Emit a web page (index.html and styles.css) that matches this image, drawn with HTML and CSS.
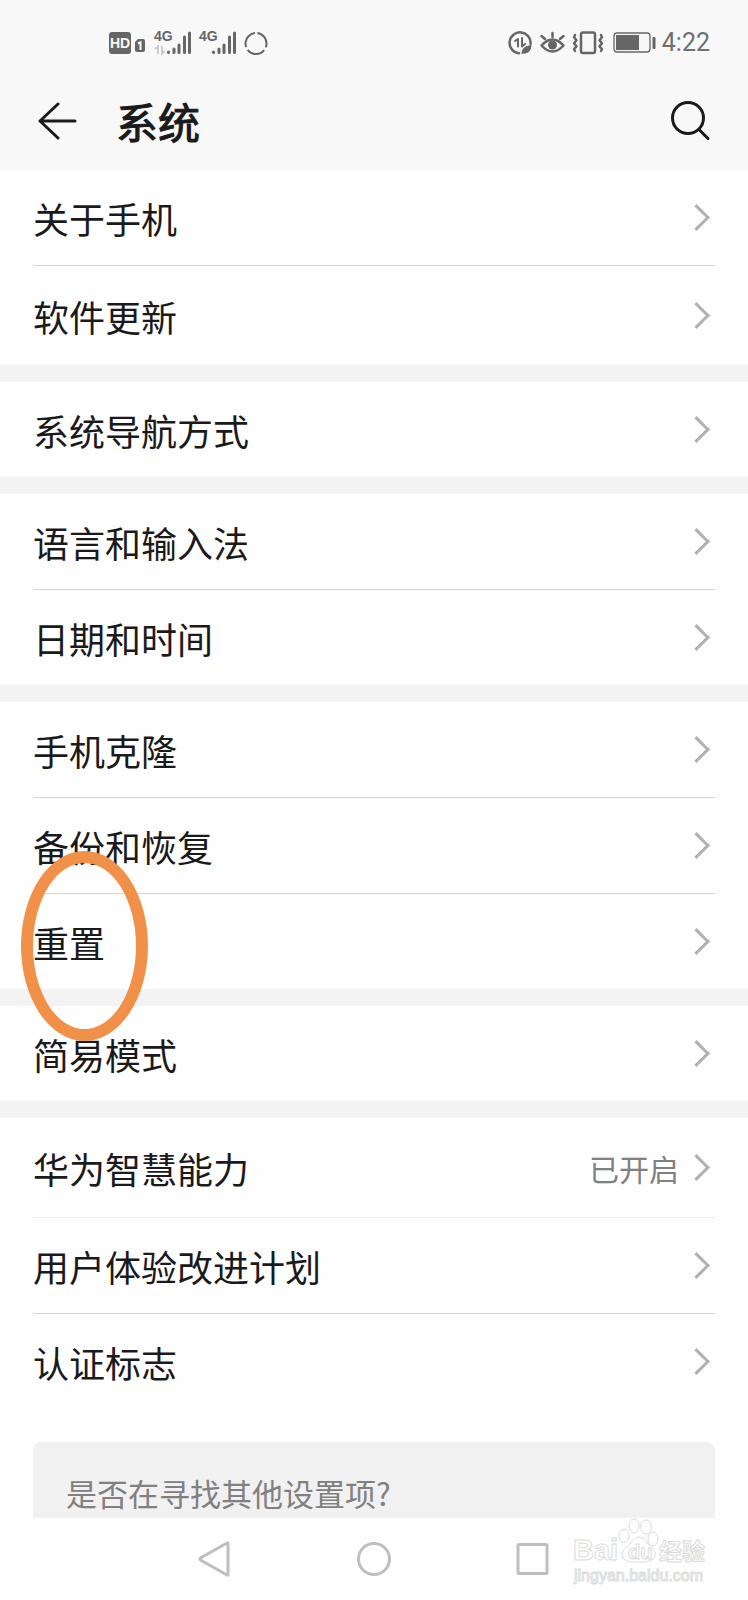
FILE: index.html
```html
<!DOCTYPE html>
<html lang="zh-CN">
<head>
    <meta charset="UTF-8">
    <meta name="viewport" content="width=device-width, initial-scale=1.0">
    <title>系统</title>
    <link rel="stylesheet" href="styles.css">
</head>
<body>
    <header class="top">
        <div class="status">
            <svg class="status-left" width="162" height="30" viewBox="18 8 162 30">
                <rect x="19" y="12" width="22" height="22" rx="3" fill="#666"/>
                <text x="30" y="28" class="hd" text-anchor="middle">HD</text>
                <path d="M48 19h5q2 0 2 2v9q0 2-2 2h-6q-2 0-2-2v-8z" fill="#666"/>
                <path d="M48 23.500l2.500-1.200v7.700" fill="none" stroke="#f8f8f8" stroke-width="2"/>
                <text x="64" y="21" class="net">4G</text>
                <path d="M65 29l3-2.500V34M72 26v7.500l3-2.500" fill="none" stroke="#ccc" stroke-width="2"/>
                <path d="M78.500 32v.5M84 29v3.500M89 25v7.500M94.500 17v15.500M99.500 13v19.500" class="bars"/>
                <text x="109" y="21" class="net">4G</text>
                <path d="M123.500 32v.5M129 29v3.500M134 25v7.500M139.500 17v15.500M144.500 13v19.500" class="bars"/>
                <circle cx="166" cy="23.500" r="10.500" fill="none" stroke="#666" stroke-width="2" stroke-dasharray="19 3 19 3 19 3" transform="rotate(-82 166 23.500)"/>
            </svg>
            <div class="status-right">
                <svg width="150" height="30" viewBox="18 8 150 30">
                    <g fill="none" stroke="#666" stroke-width="2.500" stroke-linecap="round" stroke-linejoin="round">
                        <path d="M29 33.300A10.500 10.500 0 1 1 40.500 24" />
                        <path d="M25 21l3-2v7.500M32 18v8.500l3-2.500" stroke-width="2"/>
                        <path d="M32 33q-.5-6 9-7.500-.5 9-9 7.500z" fill="#666" stroke-width="1"/>
                        <path d="M51.500 25.500q11-12 22 0-11 12-22 0z"/>
                        <circle cx="62.500" cy="25" r="4.500" fill="#666" stroke="none"/>
                        <path d="M62.500 13v4M51.500 16l3.500 3M73.500 16l-3.500 3"/>
                        <rect x="91" y="12.500" width="14" height="20.500" rx="2"/>
                        <path d="M85 15l-1 2.300 2.500 3-2.500 3 2.500 3-2.500 2.700 1 2M111 15l1 2.300-2.500 3 2.500 3-2.500 3 2.500 2.700-1 2"/>
                        <rect x="124" y="13" width="36" height="19" rx="3" stroke-width="1.300"/>
                    </g>
                    <rect x="126" y="15" width="23" height="15" fill="#666"/>
                    <rect x="162.500" y="17" width="3" height="12" rx="1" fill="#666"/>
                </svg>
                <span class="time">4:22</span>
            </div>
        </div>
        <div class="title-bar">
            <button class="icon-btn" aria-label="返回">
                <svg width="40" height="40" viewBox="0 0 40 40" fill="none" stroke="#1a1a1a" stroke-width="3" stroke-linecap="round" stroke-linejoin="round">
                    <path d="M37 20H2M20 3L2 20l18 17"/>
                </svg>
            </button>
            <h1>系统</h1>
            <button class="icon-btn" aria-label="搜索">
                <svg width="40" height="40" viewBox="0 0 40 40" fill="none" stroke="#1a1a1a" stroke-width="3" stroke-linecap="round">
                    <circle cx="18" cy="17" r="15.500"/>
                    <path d="M29 28.500l9 9"/>
                </svg>
            </button>
        </div>
    </header>

    <main class="settings">
        <ul class="group">
            <li><a class="row" href="#">关于手机</a></li>
            <li><a class="row tall" href="#">软件更新</a></li>
        </ul>
        <ul class="group">
            <li><a class="row" href="#">系统导航方式</a></li>
        </ul>
        <ul class="group">
            <li><a class="row" href="#">语言和输入法</a></li>
            <li><a class="row" href="#">日期和时间</a></li>
        </ul>
        <ul class="group">
            <li><a class="row" href="#">手机克隆</a></li>
            <li><a class="row" href="#">备份和恢复</a></li>
            <li class="marked"><a class="row" href="#">重置</a></li>
        </ul>
        <ul class="group">
            <li><a class="row" href="#">简易模式</a></li>
        </ul>
        <ul class="group">
            <li><a class="row tall" href="#">华为智慧能力<span class="value">已开启</span></a></li>
            <li class="soft"><a class="row" href="#">用户体验改进计划</a></li>
            <li><a class="row" href="#">认证标志</a></li>
        </ul>
        <section class="more">
            <p>是否在寻找其他设置项?</p>
        </section>
    </main>

    <nav class="nav">
        <button class="nav-btn" aria-label="返回">
            <svg width="36" height="36" viewBox="0 0 36 36"><path d="M32 2.500v31q0 1-1 .5L4.500 19q-1-1 0-2L31 2q1-.5 1 .5z"/></svg>
        </button>
        <button class="nav-btn" aria-label="主页">
            <svg width="36" height="36" viewBox="0 0 36 36"><circle cx="18" cy="18" r="15.500"/></svg>
        </button>
        <button class="nav-btn" aria-label="最近任务">
            <svg width="36" height="36" viewBox="0 0 36 36"><rect x="2" y="3.500" width="29" height="29" rx="1"/></svg>
        </button>
        <svg class="watermark" width="140" height="68" viewBox="0 0 140 68">
            <text x="1" y="42" class="wm-big">Bai</text>
            <g class="paw">
                <ellipse cx="52" cy="18" rx="5" ry="6.500"/>
                <ellipse cx="62" cy="8" rx="5" ry="7"/>
                <ellipse cx="74" cy="9" rx="5.500" ry="7"/>
                <ellipse cx="81" cy="21" rx="5" ry="7"/>
                <path d="M67 19q5 0 9 7 9 7 7 12-2 7-16 6-15 1-17-6 0-7 8-12 4-7 9-7z"/>
            </g>
            <text x="56" y="41" class="wm-du">du</text>
            <text x="87" y="42" class="wm-cn">经验</text>
            <text x="2" y="63" class="wm-url">jingyan.baidu.com</text>
        </svg>
    </nav>
</body>
</html>
```
FILE: styles.css
```css
*,
*::after {
    box-sizing: border-box;
}
body {
    margin: 0;
    height: 100vh;
    display: flex;
    flex-direction: column;
    font-family: "Noto Sans CJK SC", sans-serif;
    background-color: #fefefe;
    color: #1a1a1a;
}
button {
    border: none;
    background: none;
    padding: 0;
    cursor: pointer;
}
svg {
    display: block;
}

/* status bar and title */
.top {
    flex: none;
    background-color: #f8f8f8;
}
.status {
    height: 86px;
    padding: 0 38px 0 108px;
    display: flex;
    align-items: center;
    justify-content: space-between;
}
.status-right {
    display: flex;
    align-items: center;
    gap: 4px;
}
.time {
    font: 25px/30px Roboto, sans-serif;
    color: #707070;
}
.hd {
    font: bold 14px "Liberation Sans", sans-serif;
    fill: #f8f8f8;
}
.net {
    font: bold 14px "Liberation Sans Narrow", "Liberation Sans", sans-serif;
    fill: #666;
}
.bars {
    fill: none;
    stroke: #666;
    stroke-width: 3;
    stroke-linecap: round;
}
.title-bar {
    height: 84px;
    padding: 0 38px 14px;
    display: flex;
    align-items: center;
}
.title-bar h1 {
    flex: 1;
    margin: 0 0 0 38px;
    font-size: 42px;
    line-height: 60px;
    font-weight: 400;
    -webkit-text-stroke: 1px #1a1a1a;
}

/* settings list */
.settings {
    flex: 1;
    min-height: 0;
    overflow-y: auto;
    scrollbar-width: none;
}
.group {
    list-style: none;
    margin: 0;
    padding: 0 33px;
}
.group + .group {
    border-top: 17px solid #f3f3f3;
}
.group li + li {
    border-top: 1px solid #d4d4d4;
}
.group li + .soft {
    border-top-color: #ececec;
}
.row {
    display: flex;
    align-items: center;
    height: 95px;
    padding-right: 9px;
    font-size: 36px;
    line-height: 52px;
    color: inherit;
    text-decoration: none;
}
.tall {
    height: 99px;
}
.row::after {
    content: "";
    width: 19px;
    height: 19px;
    margin-left: auto;
    border: solid #b0b0b0;
    border-width: 3px 3px 0 0;
    transform: rotate(45deg);
}
.value {
    flex: 1;
    margin-right: 8px;
    text-align: right;
    font-size: 30px;
    color: #808080;
}
.marked {
    position: relative;
}
.marked::after {
    content: "";
    position: absolute;
    left: -12px;
    top: -43px;
    width: 127px;
    height: 190px;
    border: 12px solid #f19149;
    border-radius: 50%;
    pointer-events: none;
}
.more {
    margin: 33px 33px 0;
    padding: 28px 33px;
    border-radius: 8px;
    background-color: #f1f1f1;
    color: #808080;
}
.more p {
    margin: 0;
    font-size: 31px;
    line-height: 45px;
}

/* navigation keys */
.nav {
    position: relative;
    flex: none;
    height: 82px;
    display: flex;
    align-items: center;
    justify-content: center;
    gap: 112px;
}
.nav-btn {
    width: 48px;
    height: 48px;
    display: flex;
    align-items: center;
    justify-content: center;
}
.nav-btn svg {
    fill: none;
    stroke: #bfbfbf;
    stroke-width: 3;
}
.watermark {
    position: absolute;
    right: 36px;
    top: 0;
    fill: #fefefe;
    stroke: #dcdcdc;
    stroke-width: 1;
}
.wm-big {
    font: bold 29px "Liberation Sans", sans-serif;
}
.wm-du {
    font: bold 20px "Liberation Sans", sans-serif;
}
.wm-cn {
    font: bold 23px "Noto Sans CJK SC", sans-serif;
}
.wm-url {
    font: 16px "Liberation Sans", sans-serif;
}
```
